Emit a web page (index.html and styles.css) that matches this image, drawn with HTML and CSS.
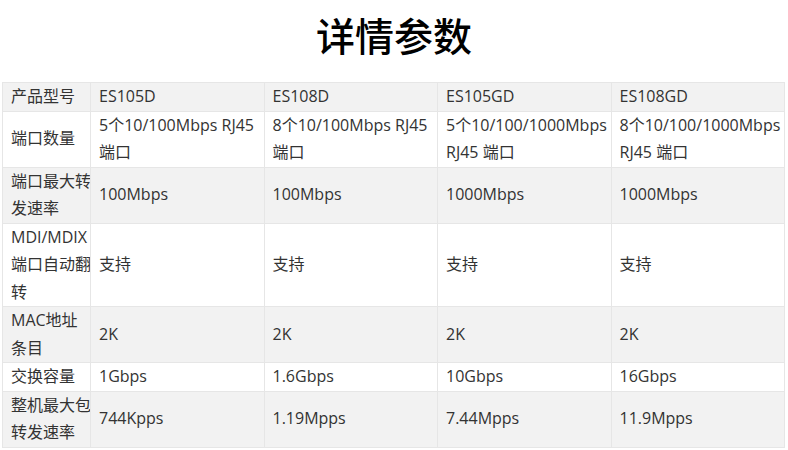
FILE: index.html
```html
<!DOCTYPE html>
<html lang="zh-CN">
<head>
<meta charset="utf-8">
<title>详情参数</title>
<link rel="stylesheet" href="styles.css">
</head>
<body>
<h1 class="title">详情参数</h1>
<table class="spec">
  <colgroup>
    <col class="c-label"><col class="c-val"><col class="c-val"><col class="c-val"><col class="c-val">
  </colgroup>
  <tr class="alt">
    <td>产品型号</td><td>ES105D</td><td>ES108D</td><td>ES105GD</td><td>ES108GD</td>
  </tr>
  <tr>
    <td>端口数量</td><td>5个10/100Mbps RJ45<br>端口</td><td>8个10/100Mbps RJ45<br>端口</td><td>5个10/100/1000Mbps<br>RJ45 端口</td><td>8个10/100/1000Mbps<br>RJ45 端口</td>
  </tr>
  <tr class="alt">
    <td>端口最大转<br>发速率</td><td>100Mbps</td><td>100Mbps</td><td>1000Mbps</td><td>1000Mbps</td>
  </tr>
  <tr>
    <td>MDI/MDIX<br>端口自动翻<br>转</td><td>支持</td><td>支持</td><td>支持</td><td>支持</td>
  </tr>
  <tr class="alt">
    <td>MAC地址<br>条目</td><td>2K</td><td>2K</td><td>2K</td><td>2K</td>
  </tr>
  <tr>
    <td>交换容量</td><td>1Gbps</td><td>1.6Gbps</td><td>10Gbps</td><td>16Gbps</td>
  </tr>
  <tr class="alt">
    <td>整机最大包<br>转发速率</td><td>744Kpps</td><td>1.19Mpps</td><td>7.44Mpps</td><td>11.9Mpps</td>
  </tr>
</table>
</body>
</html>
```
FILE: styles.css
```css
html, body {
  margin: 0;
  padding: 0;
  background: #ffffff;
}

body {
  font-family: "Open Sans", "Noto Sans CJK SC", sans-serif;
  color: #333333;
  overflow: hidden;
}

.title {
  margin: 0;
  height: 82px;
  box-sizing: border-box;
  padding-top: 10px;
  text-align: center;
  font-family: "Noto Sans CJK SC", sans-serif;
  font-size: 39px;
  line-height: 48px;
  font-weight: 500;
  color: #000000;
}

.spec {
  margin-left: 2px;
  width: 782px;
  border-collapse: collapse;
  table-layout: fixed;
  font-size: 16px;
}

.c-label { width: 88px; }
.c-val { width: 173.5px; }

.spec td {
  border: 1px solid #e6e6e6;
  padding: 0 1px 0 8px;
  line-height: 27.5px;
  vertical-align: middle;
  white-space: nowrap;
  overflow: hidden;
}

.spec tr.alt td {
  background: #f2f2f2;
}
```
